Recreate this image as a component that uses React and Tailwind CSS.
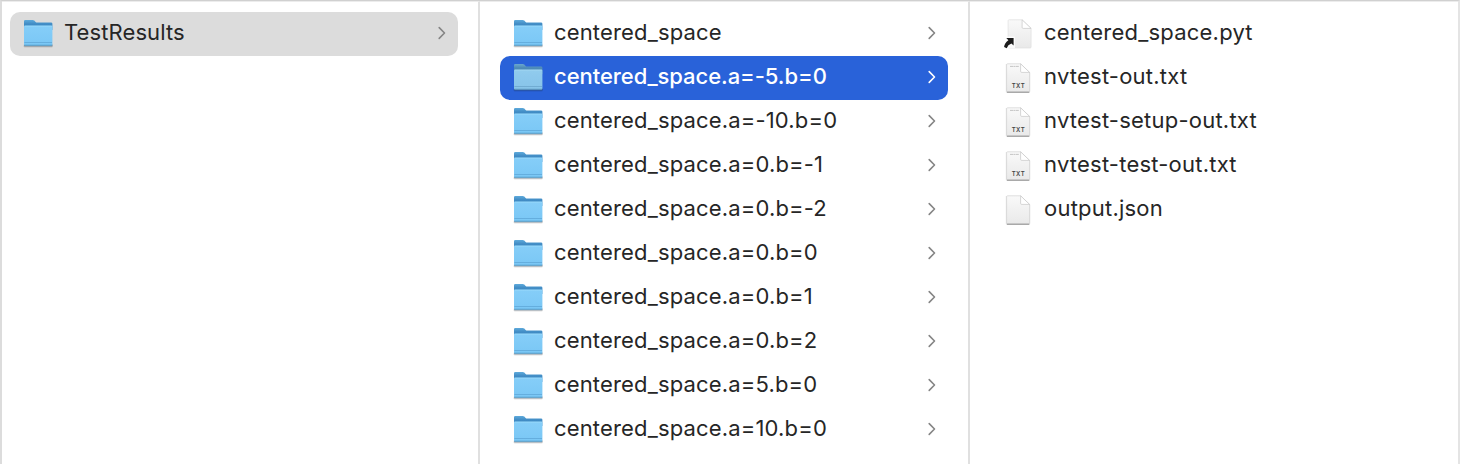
const results = [
  'centered_space',
  'centered_space.a=-5.b=0',
  'centered_space.a=-10.b=0',
  'centered_space.a=0.b=-1',
  'centered_space.a=0.b=-2',
  'centered_space.a=0.b=0',
  'centered_space.a=0.b=1',
  'centered_space.a=0.b=2',
  'centered_space.a=5.b=0',
  'centered_space.a=10.b=0',
];

const files = [
  { name: 'centered_space.pyt', kind: 'alias' },
  { name: 'nvtest-out.txt', kind: 'txt' },
  { name: 'nvtest-setup-out.txt', kind: 'txt' },
  { name: 'nvtest-test-out.txt', kind: 'txt' },
  { name: 'output.json', kind: 'plain' },
];

function Gradients() {
  return (
    <svg width="0" height="0" className="absolute" aria-hidden="true">
      <defs>
        <linearGradient id="folderBack" x1="0" y1="0" x2="0" y2="1">
          <stop offset="0" stopColor="#5eaadb" />
          <stop offset="0.4" stopColor="#408bc4" />
          <stop offset="1" stopColor="#4794ca" />
        </linearGradient>
        <linearGradient id="folderFront" x1="0" y1="0" x2="0" y2="1">
          <stop offset="0" stopColor="#9adafb" />
          <stop offset="0.1" stopColor="#84cdf8" />
          <stop offset="1" stopColor="#7ac7f5" />
        </linearGradient>
        <linearGradient id="paper" x1="0" y1="0" x2="0" y2="1">
          <stop offset="0" stopColor="#f9f9f9" />
          <stop offset="1" stopColor="#e9e9e9" />
        </linearGradient>
      </defs>
    </svg>
  );
}

function Folder({ selected }) {
  return (
    <svg width="32" height="32" viewBox="0 0 32 32" className={selected ? 'shrink-0 saturate-[0.8]' : 'shrink-0'}>
      <rect x="1.6" y="26" width="29.2" height="3.6" rx="1.4" fill="#000" opacity="0.12" />
      <rect x="2" y="26" width="28.5" height="2.6" rx="1.2" fill="#31506a" opacity="0.45" />
      <path d="M2 3.2Q2 2 3.2 2H10.6Q11.6 2 12.3 2.6L13.6 3.9Q14.2 4.5 15.2 4.5H29Q30.4 4.5 30.4 5.8V12H2Z" fill="url(#folderBack)" />
      <path d="M2 8.7Q2 7.5 3.2 7.5H29.2Q30.4 7.5 30.4 8.7V26.6Q30.4 27.6 29.3 27.6H3.1Q2 27.6 2 26.6Z" fill="url(#folderFront)" />
      <path d="M2.4 24.5H30" stroke="#62aadb" strokeWidth="0.9" />
      <path d="M2.4 27.2H30" stroke="#529bc9" strokeWidth="0.8" />
    </svg>
  );
}

function FileIcon({ kind }) {
  const alias = kind === 'alias';
  const txt = kind === 'txt';
  return (
    <svg width="32" height="32" viewBox="0 0 32 32" className="shrink-0 overflow-visible">
      <g transform={alias ? 'translate(1.5 0)' : undefined}>
        {!alias && <path d="M3.8 2H18.8L28.2 10.8V29.4Q28.2 31 26.6 31H5.4Q3.8 31 3.8 29.4Z" fill="#000" opacity="0.1" />}
        <path d="M4.6 2.7Q4.6 1.8 5.6 1.8H18.6L27.6 10.4V29Q27.6 30 26.6 30H5.6Q4.6 30 4.6 29Z" fill="url(#paper)" stroke={alias ? '#e0e0e0' : '#d3d3d3'} strokeWidth="0.7" />
        {!alias && <path d="M5 30.2H27.2" stroke="#919191" strokeWidth="1" />}
        <path d="M18.6 1.8V9.3Q18.6 10.4 19.7 10.4H27.6Z" fill="#fff" stroke="#c6c6c6" strokeWidth="0.7" />
      </g>
      {txt && (
        <>
          <path d="M8 4.4H17" stroke="#c4c4c4" strokeWidth="1" strokeDasharray="3 .4 2 .4" />
          <text x="16.4" y="26.3" textAnchor="middle" fontSize="6" fontWeight="600" letterSpacing="0.5" fill="#444444">TXT</text>
        </>
      )}
      {alias && (
        <>
          <path d="M1.2 18.6H13V30.2H1.2Z" fill="#fff" opacity="0.8" />
          <path d="M4.3 20H11.6V27.4L9.4 25.5Q5.8 26.9 4.7 30.2L2.1 28.9Q2.3 25.4 6.4 22.3Z" fill="#1c1c1c" />
        </>
      )}
    </svg>
  );
}

function Chevron({ selected }) {
  return (
    <svg width="8" height="14" viewBox="0 0 8 14" fill="none" className={selected ? 'mb-0.5 shrink-0 text-white' : 'mb-0.5 shrink-0 text-[#858585]'}>
      <path d="M1.2 1.6L6.5 7L1.2 12.4" stroke="currentColor" strokeWidth="1.6" strokeLinecap="round" strokeLinejoin="round" />
    </svg>
  );
}

function Row({ name, icon, tone = 'text-[#262626] tracking-[0.16px]', trailing }) {
  return (
    <li className={`flex h-11 items-center rounded-[10px] pr-3 pl-3 ${tone}`}>
      {icon}
      <span className="mb-1 ml-[10px] flex-1 whitespace-nowrap">{name}</span>
      {trailing}
    </li>
  );
}

export default function App() {
  return (
    <main className="flex h-[464px] w-[1460px] overflow-hidden border-t border-r-2 border-l-2 border-t-[#d0d0d0] border-r-[#e4e4e4] border-l-[#dcdcdc] bg-white font-['Inter',sans-serif] text-[22px] leading-7">
      <Gradients />
      <ul className="w-[478px] shrink-0 border-t border-r-2 border-t-[#ececec] border-r-[#e0e0e0] py-[10px] pr-5 pl-2">
        <Row name="TestResults" tone="bg-[#dcdcdc] text-[#262626] tracking-[0.1px]" icon={<Folder />} trailing={<Chevron />} />
      </ul>
      <ul className="w-[490px] shrink-0 border-t border-r-2 border-t-[#ececec] border-r-[#e0e0e0] px-5 py-[10px]">
        {results.map((name, i) => (
          <Row
            key={name}
            name={name}
            tone={i === 1 ? 'bg-[#2962d9] text-white font-medium tracking-[-0.05px]' : undefined}
            icon={<Folder selected={i === 1} />}
            trailing={<Chevron selected={i === 1} />}
          />
        ))}
      </ul>
      <ul className="flex-1 border-t border-t-[#ececec] px-5 py-[10px]">
        {files.map((file) => (
          <Row key={file.name} name={file.name} tone="text-[#262626] tracking-[0.22px]" icon={<FileIcon kind={file.kind} />} />
        ))}
      </ul>
    </main>
  );
}
